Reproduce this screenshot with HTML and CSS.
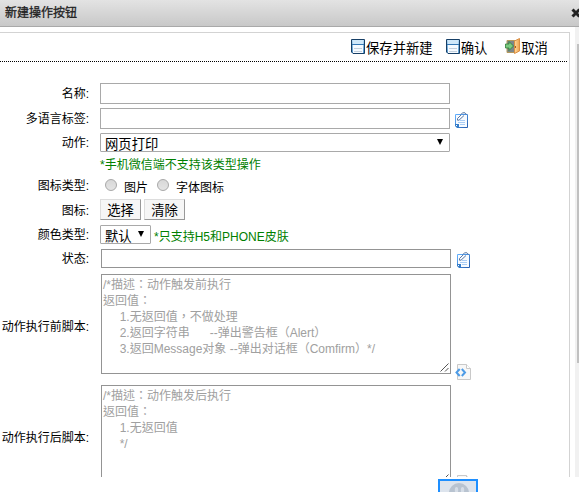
FILE: index.html
```html
<!DOCTYPE html>
<html lang="zh-CN">
<head>
<meta charset="utf-8">
<title>新建操作按钮</title>
<link rel="stylesheet" href="styles.css">
</head>
<body>
<svg class="defs" width="0" height="0">
  <defs>
    <linearGradient id="blue" x1="0" y1="0" x2="0" y2="1"><stop offset="0" stop-color="#b9dcf5"/><stop offset="1" stop-color="#4c92cc"/></linearGradient>
    <linearGradient id="edge" x1="0" y1="0" x2="1" y2="1"><stop offset="0" stop-color="#63b1ff"/><stop offset="1" stop-color="#275fae"/></linearGradient>
    <linearGradient id="door" x1="0" y1="0" x2="1" y2="0"><stop offset="0" stop-color="#ffdca0"/><stop offset="1" stop-color="#f0a04a"/></linearGradient>
    <symbol id="save" viewBox="0 0 14 15">
      <path d="M.5.5h13v14H2l-1.500-1.500z" fill="url(#blue)" stroke="#173f66"/>
      <path d="M2 1h10v4H2z" fill="#cfe8fa"/><path d="M1 5h12v1H1z" fill="#3478b5"/>
      <path d="M2 6h10v8H2z" fill="#f5faff"/>
      <path d="M3 9.500h8M3 12.500h8" stroke="#c3d0dd"/>
    </symbol>
    <symbol id="note" viewBox="0 0 13 16">
      <path d="M.5 2.500h12v13H3.500l-3-2.500z" fill="#f8fbff" stroke="url(#edge)"/>
      <path d="M0 12h4v4H2l-2-2z" fill="#347cc9"/><path d="M1 13h1v1H1z" fill="#fff"/>
      <path d="M5 8.500h5M3 10.500h7M5 12.500h5" stroke="#a9cdf5"/>
      <path d="M6 2.500 7.500.8h2.500l1.500 1.700M6 3 2.500 6.500v1.700h1.500L9 3.500" fill="none" stroke="#5b78a3"/>
    </symbol>
    <symbol id="code" viewBox="0 0 16 16">
      <path d="M2.500.5h9l4 4v11h-13z" fill="#f7f7f7" stroke="#c9c9c9"/>
      <path d="M11.500.5v4h4" fill="#fff" stroke="#c9c9c9"/>
      <path d="M4.700 5 1.500 8.500 4.700 12M6.800 5 10 8.500 6.800 12" fill="none" stroke="#4d9be6" stroke-width="2"/>
    </symbol>
  </defs>
</svg>
<header class="titlebar">
  <h1>新建操作按钮</h1>
  <svg class="close" width="10" height="10" viewBox="0 0 10 10"><path d="M1.500 1.500l7 7M8.500 1.500l-7 7" stroke="#222" stroke-width="3"/></svg>
</header>
<main class="viewport">
  <section class="panel">
    <nav class="toolbar">
      <a class="tool"><svg width="14" height="15"><use href="#save"/></svg>保存并新建</a>
      <a class="tool"><svg width="14" height="15"><use href="#save"/></svg>确认</a>
      <a class="tool exit"><svg width="15" height="16" viewBox="0 0 15 16">
        <path d="M2 2.500h8v12H2z" fill="#7d868a" stroke="#b59a5c"/>
        <path d="M9.500 3 14.500.5v12.500l-5 2.500z" fill="url(#door)" stroke="#d98f45"/>
        <path d="M.5 6h3.500V3.500L8.500 8 4 12.500V10H.5z" fill="#7cca80" stroke="#2d7d39" stroke-width=".8"/><path d="M10.500 8v2" stroke="#a35e20"/>
      </svg>取消</a>
    </nav>
    <form class="form">
      <div class="row name"><label>名称:</label><div class="input"></div></div>
      <div class="row i18n"><label>多语言标签:</label><div class="input"></div><svg class="note" width="13" height="16"><use href="#note"/></svg></div>
      <div class="row action"><label>动作:</label><div class="select wide"><span>网页打印</span><i class="arrow"></i></div></div>
      <div class="row hint"><label></label><span class="tip">*手机微信端不支持该类型操作</span></div>
      <div class="row kind"><label>图标类型:</label><i class="radio"></i><span class="choice">图片</span><i class="radio"></i><span class="choice">字体图标</span></div>
      <div class="row icon"><label>图标:</label><span class="button">选择</span><span class="button">清除</span></div>
      <div class="row color"><label>颜色类型:</label><div class="select"><span>默认</span><i class="arrow"></i></div><span class="tip">*只支持H5和PHONE皮肤</span></div>
      <div class="row state"><label>状态:</label><div class="input"></div><svg class="note" width="13" height="16"><use href="#note"/></svg></div>
      <div class="row script"><label>动作执行前脚本:</label><div class="area" lang="zh-TW">/*描述：动作触发前执行
返回值：
     1.无返回值，不做处理
     2.返回字符串      --弹出警告框（Alert）
     3.返回Message对象 --弹出对话框（Comfirm）*/<svg class="grip" width="9" height="9" viewBox="0 0 9 9"><path d="M.5 8.500l8-8M5 8.500 8.500 5" stroke="#555"/></svg></div><svg class="code" width="16" height="16"><use href="#code"/></svg></div>
      <div class="row script"><label>动作执行后脚本:</label><div class="area" lang="zh-TW">/*描述：动作触发后执行
返回值：
     1.无返回值
     */<svg class="grip" width="9" height="9" viewBox="0 0 9 9"><path d="M.5 8.500l8-8M5 8.500 8.500 5" stroke="#555"/></svg></div><svg class="code" width="16" height="16"><use href="#code"/></svg></div>
    </form>
  </section>
  <div class="scrollbar"><div class="thumb"></div></div>
</main>
<footer class="dock"><div class="face"><svg width="36" height="11" viewBox="0 0 36 11"><circle cx="19" cy="12" r="10" fill="#b8c3d0"/><ellipse cx="16.500" cy="9" rx="1.700" ry="3" fill="#d5dde7"/><ellipse cx="22.500" cy="9" rx="1.700" ry="3" fill="#d5dde7"/></svg></div></footer>
</body>
</html>
```
FILE: styles.css
```css
* { box-sizing: border-box; }
body {
  margin: 0;
  height: 492px;
  overflow: hidden;
  display: flex;
  flex-direction: column;
  background: #fff;
  color: #000;
  font: 12px/16px "Liberation Sans", "Noto Sans CJK SC", sans-serif;
}
svg { display: block; flex: none; }
.defs { position: absolute; }
.titlebar {
  flex: none;
  height: 27px;
  padding: 0 0 1px 5px;
  display: flex;
  align-items: center;
  justify-content: space-between;
  overflow: hidden;
  background: linear-gradient(#e3e3e3, #c8c8c8);
  border-bottom: 1px solid #a9a9a9;
}
h1 { margin: 0; font-size: 12px; font-weight: 400; color: #222; -webkit-text-stroke: .3px #222; }
.close { margin-right: -2px; }
.viewport { flex: none; height: 450px; display: flex; overflow: hidden; }
.panel {
  width: 570px;
  height: 520px;
  margin-top: 5px;
  flex: none;
  border: solid #d3d3d3;
  border-width: 1px 1px 0 0;
}
.toolbar {
  height: 29px;
  width: 567px;
  padding: 3px 0 0 351px;
  display: flex;
  align-items: center;
  gap: 13px;
  font-size: 13.33px;
  background: repeating-linear-gradient(90deg, #000 0 1px, #fff 1px 2px) bottom / 100% 1px no-repeat;
}
.tool { display: flex; align-items: center; gap: 1px; white-space: nowrap; }
.tool svg { margin-top: -5px; }
.exit { margin-left: 5px; }
.exit svg { margin-top: -6px; }
.form { margin-top: 21px; }
.row { display: flex; align-items: center; white-space: nowrap; }
label { width: 89px; margin-right: 11px; flex: none; text-align: right; }
.input { width: 350px; height: 21px; border: 1px solid #a9a9a9; }
.note { margin-left: 5px; }
.name, .i18n { height: 21px; }
.i18n { margin-top: 4px; }
.i18n .note { margin-top: 3px; }
.action { height: 19px; margin-top: 4px; }
.select {
  height: 19px;
  width: 51px;
  padding: 0 6px 0 4px;
  display: flex;
  align-items: center;
  justify-content: space-between;
  border: 1px solid #a9a9a9;
  border-radius: 1px;
  font-size: 13.33px;
}
.wide { width: 350px; }
.select span { padding-top: 4px; }
.arrow { border: solid transparent; border-width: 6px 3px 0; border-top-color: #000; margin-top: -2px; }
.tip { color: #008000; }
.hint { height: 20px; margin-top: 3px; }
.kind { height: 22px; }
.radio {
  width: 12px;
  height: 12px;
  margin: -2px 0 0 5px;
  border: 1px solid #a8a8a8;
  border-radius: 50%;
  background: linear-gradient(#d8d8d8, #e4e4e4);
}
.choice { margin: 4px 4px 0 7px; }
.choice + .radio { margin-left: 5px; }
.icon { height: 21px; margin-top: 2px; }
.icon label { padding-top: 2px; }
.button {
  width: 41px;
  height: 21px;
  margin-right: 3px;
  border: 1px solid #ddd;
  border-right-color: #999;
  border-bottom-color: #999;
  background: #f6f6f6;
  font-size: 13.33px;
  line-height: 21px;
  text-align: center;
}
.color { height: 19px; margin-top: 5px; }
.color .tip { margin: 4px 0 0 3px; }
.state { height: 19px; margin-top: 5px; }
.state .input { height: 19px; margin-left: 1px; border-color: #949494; }
.state .note { margin: 3px 0 0 6px; }
.script { height: 100px; margin-top: 6px; }
.script + .script { margin-top: 11px; }
.script label { padding-top: 5px; }
.area {
  position: relative;
  width: 350px;
  height: 100px;
  margin-left: 1px;
  padding: 2px 1px;
  border: 1px solid #949494;
  color: #a0a0a0;
  font-family: "Liberation Sans", "Noto Sans CJK TC", sans-serif;
  white-space: pre;
}
.grip { position: absolute; right: 1px; bottom: 1px; }
.code { align-self: flex-end; margin: 0 0 -6px 4px; }
.scrollbar {
  display: flex;
  align-items: flex-start;
  width: 4px;
  height: 450px;
  margin-left: 5px;
  flex: none;
  background: #f1f1f1;
}
.thumb { width: 2px; height: 319px; margin: 17px 0 0 2px; background: #c1c1c1; }
.dock { flex: none; height: 15px; padding: 2px 0 0 438px; overflow: hidden; }
.face { width: 40px; height: 40px; border: 2px solid #1e8fff; background: #dde4ed; }
```
